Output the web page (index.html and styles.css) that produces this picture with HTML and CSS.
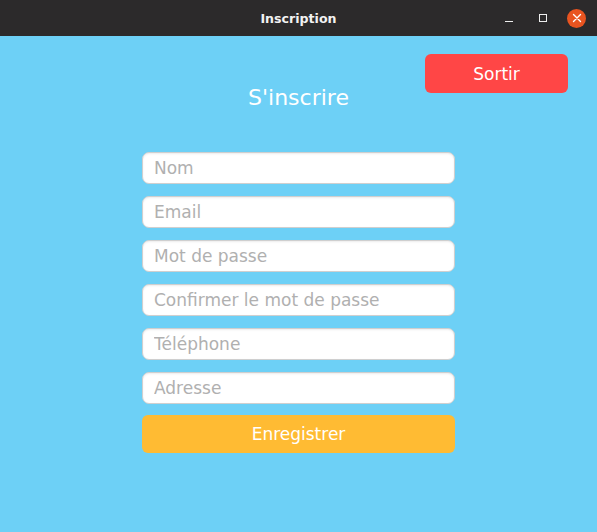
FILE: index.html
```html
<!DOCTYPE html>
<html lang="fr">
<head>
<meta charset="utf-8">
<link rel="stylesheet" href="styles.css">
</head>
<body>
<div class="window">
  <header class="titlebar">
    <span class="title">Inscription</span>
    <div class="controls">
      <span class="ctl min"></span>
      <span class="ctl max"></span>
      <span class="ctl close">
        <svg width="10" height="10" viewBox="0 0 10 10"><path d="M1.5 1.5 L8.5 8.5 M8.5 1.5 L1.5 8.5" stroke="#fff" stroke-width="1.4" stroke-linecap="round"/></svg>
      </span>
    </div>
  </header>
  <main class="content">
    <div class="topbar"><button class="btn-exit">Sortir</button></div>
    <h1 class="heading">S'inscrire</h1>
    <form class="form">
      <input class="field" placeholder="Nom">
      <input class="field" placeholder="Email">
      <input class="field" placeholder="Mot de passe">
      <input class="field" placeholder="Confirmer le mot de passe">
      <input class="field" placeholder="Téléphone">
      <input class="field" placeholder="Adresse">
      <button type="button" class="btn-save">Enregistrer</button>
    </form>
  </main>
</div>
</body>
</html>
```
FILE: styles.css
```css
html, body { margin: 0; padding: 0; }
body { width: 597px; height: 532px; overflow: hidden; font-family: "DejaVu Sans", sans-serif; }
.window { display: flex; flex-direction: column; height: 532px; }
.titlebar {
  height: 36px; background: #2c2a2b; display: flex; align-items: center; justify-content: center;
  position: relative; flex: none;
}
.title { color: #f2f2f2; font-weight: bold; font-size: 12.6px; font-family: "DejaVu Sans", sans-serif; }
.controls { position: absolute; right: 11px; top: 0; height: 36px; display: flex; align-items: center; gap: 15px; }
.ctl { width: 19px; height: 19px; display: flex; align-items: center; justify-content: center; position: relative; }
.min::after { content: ""; width: 8px; height: 1px; background: #eee; margin-top: 7px; }
.max::after { content: ""; width: 6px; height: 6px; border: 1px solid #eee; }
.close { background: #e95420; border-radius: 50%; }
.content { flex: 1; background: #6dd0f6; display: flex; flex-direction: column; align-items: center; }
.topbar { align-self: stretch; display: flex; justify-content: flex-end; padding: 18px 29px 0 0; height: 39px; }
.btn-exit {
  width: 143px; height: 39px; background: #ff4646; color: #fff; border: none; border-radius: 6px;
  font-family: "DejaVu Sans", sans-serif; font-size: 17px; padding: 0;
}
.heading { margin: -12px 0 0 0; font-weight: normal; font-size: 22px; color: #fff; line-height: 34px; }
.form { margin-top: 37px; width: 313px; display: flex; flex-direction: column; gap: 12px; }
.field {
  box-sizing: border-box; height: 32px; border: 1px solid #cfcfcf; border-radius: 7px; background: #fff;
  box-shadow: inset 0 1px 2px rgba(0,0,0,0.08);
  font-family: "DejaVu Sans", sans-serif; font-size: 17px; padding: 0 11px; color: #333; outline: none;
}
.field::placeholder { color: #b0b0b0; }
.btn-save {
  margin-top: -1px; height: 38px; background: #ffbb33; color: #fff; border: none; border-radius: 6px;
  font-family: "DejaVu Sans", sans-serif; font-size: 17px; padding: 0;
}
```
